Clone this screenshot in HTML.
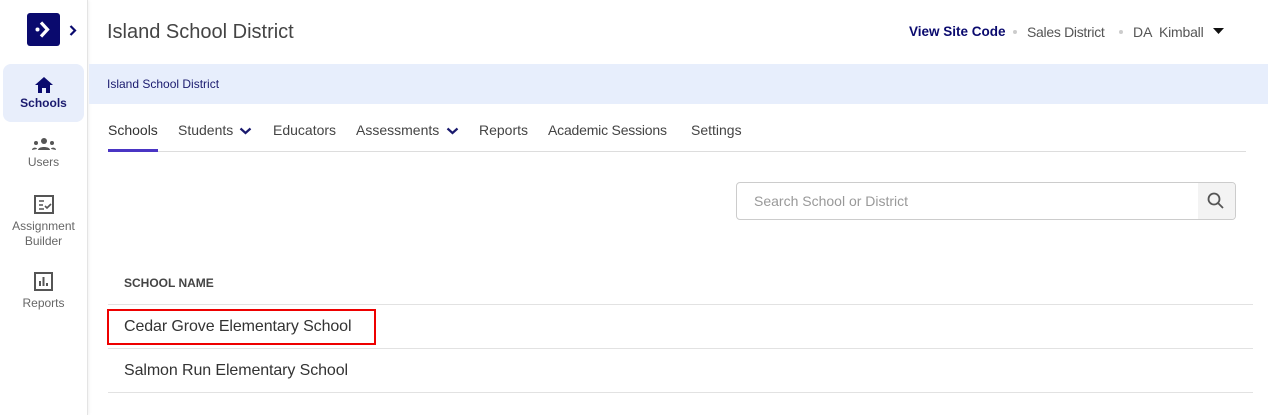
<!DOCTYPE html>
<html><head><style>
*{box-sizing:border-box;margin:0;padding:0}
body{width:1268px;height:415px;overflow:hidden;background:#fff;font-family:"Liberation Sans",sans-serif;position:relative;color:#333}
.side{position:absolute;left:0;top:0;width:88px;height:415px;border-right:1px solid #e4e4e4;box-shadow:1px 0 3px rgba(0,0,0,.06)}
.logo{position:absolute;left:27px;top:13px;width:33px;height:33px;background:#0a0a6e;border-radius:3px}
.nav{position:absolute;left:3px;width:81px;text-align:center;font-size:12px;color:#666;line-height:15px}
.abs{position:absolute;white-space:nowrap}
.t{position:absolute;top:122px;font-size:14px;color:#444;white-space:nowrap}
.tr{position:absolute;top:24px;font-size:14px;color:#555;white-space:nowrap}
.dot{position:absolute;top:30px;width:4px;height:4px;border-radius:2px;background:#ccc}
</style></head><body>
<div class="side">
<div class="logo"><svg width="33" height="33" viewBox="0 0 33 33"><path d="M14 9.5l6.5 7-6.5 7" stroke="#fff" stroke-width="3.2" fill="none"/><circle cx="10.5" cy="16.5" r="2" fill="#fff"/></svg></div>
<svg class="abs" style="left:69px;top:25px" width="8" height="11"><path d="M1.5 1l4.5 4.5L1.5 10" stroke="#0a0a6e" stroke-width="2.2" fill="none"/></svg>
<div class="nav" style="top:64px;height:58px;background:#e8eefb;border-radius:8px;color:#1a1a6e;font-weight:bold"><svg style="margin-top:12px" width="20" height="18" viewBox="0 0 20 18"><path d="M10 1L1 9h3v8h4v-5h4v5h4V9h3z" fill="#0a0a6e"/></svg><div style="margin-top:-2px">Schools</div></div>
<div class="nav" style="top:137px"><svg width="24" height="14"><circle cx="12" cy="4" r="3" fill="#555"/><path d="M6 13c0-4 12-4 12 0z" fill="#555"/><circle cx="4" cy="6" r="2" fill="#555"/><circle cx="20" cy="6" r="2" fill="#555"/><path d="M0 13c0-3 5-3 5-1zM24 13c0-3-5-3-5-1z" fill="#555"/></svg><div>Users</div></div>
<div class="nav" style="top:195px"><svg width="20" height="20"><rect x="1" y="1" width="18" height="17" fill="none" stroke="#555" stroke-width="2"/><path d="M5 6h5M5 10h4M5 14h5M11 11l2 2 4-4" stroke="#555" stroke-width="1.6" fill="none"/></svg><div>Assignment<br>Builder</div></div>
<div class="nav" style="top:272px"><svg width="20" height="20"><rect x="1" y="1" width="17" height="17" fill="none" stroke="#555" stroke-width="2"/><path d="M6 14V9M9.5 14V5M13 14v-3" stroke="#555" stroke-width="2"/></svg><div>Reports</div></div>
</div>
<div class="abs" style="left:107px;top:21px;font-size:20px;color:#444">Island School District</div>
<div class="tr" style="left:909px;color:#0a0a6e;font-weight:bold;font-size:13.5px">View Site Code</div>
<div class="dot" style="left:1013px"></div>
<div class="tr" style="left:1027px;font-size:14px;letter-spacing:-0.3px">Sales District</div>
<div class="dot" style="left:1119px"></div>
<div class="tr" style="left:1133px">DA</div>
<div class="tr" style="left:1159px;letter-spacing:-0.2px">Kimball</div>
<svg class="abs" style="left:1213px;top:28px" width="11" height="7"><path d="M0 0h11L5.5 6z" fill="#111"/></svg>
<div class="abs" style="left:89px;top:64px;width:1179px;height:40px;background:#e7eefc"></div>
<div class="abs" style="left:107px;top:77px;font-size:12px;color:#1a1a6e">Island School District</div>
<div class="t" style="left:108px;color:#333">Schools</div>
<div class="t" style="left:178px">Students</div>
<svg class="abs" style="left:239px;top:127px" width="13" height="8"><path d="M1.5 1.5l5 4.5 5-4.5" stroke="#1a1a6e" stroke-width="2.2" fill="none"/></svg>
<div class="t" style="left:273px">Educators</div>
<div class="t" style="left:356px">Assessments</div>
<svg class="abs" style="left:446px;top:127px" width="13" height="8"><path d="M1.5 1.5l5 4.5 5-4.5" stroke="#1a1a6e" stroke-width="2.2" fill="none"/></svg>
<div class="t" style="left:479px">Reports</div>
<div class="t" style="left:548px;letter-spacing:-0.2px">Academic Sessions</div>
<div class="t" style="left:691px">Settings</div>
<div class="abs" style="left:108px;top:151px;width:1138px;height:1px;background:#ddd"></div>
<div class="abs" style="left:108px;top:149px;width:50px;height:3px;background:#4a35c4"></div>
<div class="abs" style="left:736px;top:182px;width:500px;height:38px;border:1px solid #ccc;border-radius:4px;overflow:hidden">
<div style="position:absolute;left:17px;top:10px;font-size:14px;color:#999">Search School or District</div>
<div style="position:absolute;right:0;top:0;width:37px;height:36px;background:#f3f3f3"><svg style="margin:9px" width="18" height="18"><circle cx="7" cy="7" r="5.5" fill="none" stroke="#555" stroke-width="1.8"/><path d="M11 11l5 5" stroke="#555" stroke-width="1.8"/></svg></div></div>
<div class="abs" style="left:124px;top:276px;font-size:12px;font-weight:bold;color:#444">SCHOOL NAME</div>
<div class="abs" style="left:108px;top:304px;width:1145px;height:1px;background:#e2e2e2"></div>
<div class="abs" style="left:108px;top:348px;width:1145px;height:1px;background:#e2e2e2"></div>
<div class="abs" style="left:108px;top:392px;width:1145px;height:1px;background:#e2e2e2"></div>
<div class="abs" style="left:107px;top:309px;width:269px;height:36px;border:2px solid #e00"></div>
<div class="abs" style="left:124px;top:318px;font-size:16px;color:#333;letter-spacing:-0.1px">Cedar Grove Elementary School</div>
<div class="abs" style="left:124px;top:362px;font-size:16px;color:#333;letter-spacing:-0.1px">Salmon Run Elementary School</div>
</body></html>
